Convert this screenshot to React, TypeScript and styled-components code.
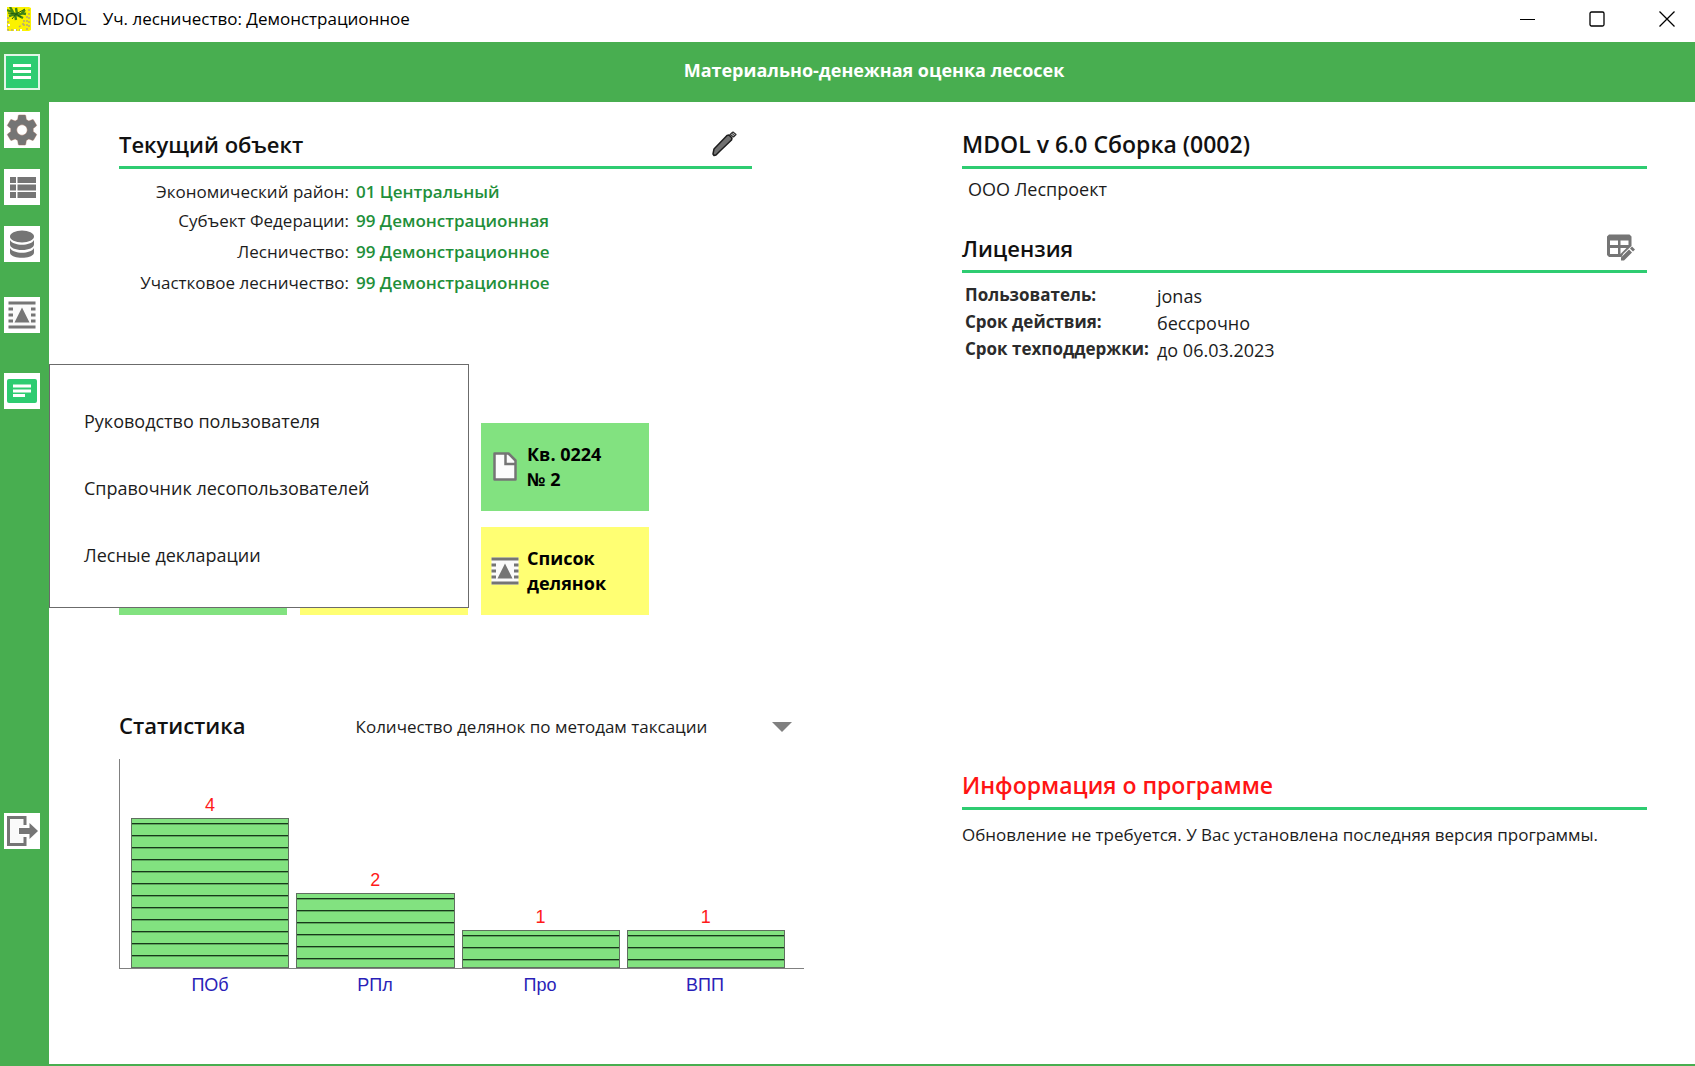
import React from 'react';
import styled, { createGlobalStyle } from 'styled-components';

const GREEN = '#48ae50';
const ACCENT = '#2ecc71';
const GREY = '#757575';

const GlobalStyle = createGlobalStyle`
  *, *::before, *::after { box-sizing: border-box; }
  body {
    margin: 0;
    background: #fff;
    color: #1c1c1c;
    font-family: "Open Sans", "Noto Sans", sans-serif;
    font-size: 17px;
    line-height: 24px;
  }
  button { font: inherit; color: inherit; border: 0; padding: 0; background: none; cursor: pointer; }
  h1, h2, p, dl, dd, dt, ul, ol { margin: 0; padding: 0; }
  ul, ol { list-style: none; }
  svg { display: block; }
`;

const Window = styled.div`
  display: flex;
  flex-direction: column;
  min-height: 100vh;
`;

const TitleBar = styled.header`
  display: flex;
  align-items: center;
  justify-content: space-between;
  height: 42px;
  padding: 0 12px 4px 7px;
  color: #000;
`;

const AppName = styled.div`
  display: flex;
  align-items: center;
  gap: 6px;
`;

const Caption = styled.span`
  padding-left: 10px;
`;

const WindowControls = styled.div`
  display: flex;
  gap: 38px;
`;

const WindowButton = styled.button`
  display: grid;
  place-items: center;
  width: 32px;
  height: 32px;
`;

const Banner = styled.div`
  display: flex;
  align-items: center;
  gap: 13px;
  height: 60px;
  padding-left: 4px;
  background: ${GREEN};
`;

const BannerTitle = styled.h1`
  flex: 1;
  padding-bottom: 4px;
  color: #fff;
  font-size: 18px;
  font-weight: 700;
  line-height: 24px;
  text-align: center;
`;

const Body = styled.div`
  display: flex;
  flex: 1;
  border-bottom: 2px solid ${GREEN};
`;

const Sidebar = styled.nav`
  position: relative;
  flex: none;
  width: 49px;
  padding: 10px 0 0 4px;
  background: ${GREEN};
`;

const ToolButton = styled.button<{ $active?: boolean; $gap?: number }>`
  display: grid;
  place-items: center;
  width: 36px;
  height: 36px;
  margin-bottom: ${(p) => p.$gap ?? 21}px;
  background: ${(p) => (p.$active ? ACCENT : '#fff')};
  border: ${(p) => (p.$active ? '2px solid #e2f6e8' : '0')};
`;

const Popup = styled.ul`
  position: absolute;
  z-index: 1;
  top: 262px;
  left: 49px;
  width: 420px;
  padding: 22px 0 19px;
  background: #fff;
  border: 1px solid #6b6b6b;
`;

const PopupItem = styled.li`
  height: 67px;
`;

const PopupButton = styled.button`
  width: 100%;
  height: 100%;
  padding-left: 34px;
  font-size: 18px;
  text-align: left;
`;

const Content = styled.main`
  display: grid;
  flex: 1;
  grid-template-columns: 1fr 1fr;
  gap: 158px;
  padding: 25px 48px 64px 70px;
`;

const Section = styled.section<{ $top?: number; $inset?: number }>`
  margin-top: ${(p) => p.$top ?? 0}px;
  margin-right: ${(p) => p.$inset ?? 0}px;
`;

const SectionHead = styled.div`
  display: flex;
  align-items: center;
  justify-content: space-between;
  height: 42px;
  padding: 0 12px 5px 0;
  border-bottom: 3px solid ${ACCENT};
`;

const Heading = styled.h2<{ $alert?: boolean; $large?: boolean }>`
  color: ${(p) => (p.$alert ? '#ff1414' : '#111')};
  font-size: ${(p) => (p.$large ? 23 : 22)}px;
  font-weight: 600;
  line-height: 30px;
`;

const IconButton = styled.button`
  display: grid;
  place-items: center;
  width: 28px;
  height: 28px;
`;

const ObjectFacts = styled.dl`
  display: grid;
  grid-template-columns: 230px 1fr;
  grid-template-rows: 28px 30px 31px 31px;
  column-gap: 7px;
  align-items: center;
  margin-top: 9px;
  dt { text-align: right; white-space: nowrap; }
  dd { color: #1f8f3a; font-weight: 600; }
`;

const LicenseFacts = styled.dl`
  display: grid;
  grid-template-columns: 192px 1fr;
  grid-auto-rows: 27px;
  align-items: center;
  margin: 9px 0 0 3px;
  dt { padding-bottom: 2px; font-weight: 700; white-space: nowrap; color: #2b2b2b; }
  dd { font-size: 18px; }
`;

const Company = styled.p`
  margin: 8px 0 0 6px;
  font-size: 18px;
`;

const Tiles = styled.div`
  display: grid;
  grid-template-columns: repeat(3, 168px);
  grid-auto-rows: 88px;
  gap: 16px 13px;
  margin-top: 125px;
`;

const Tile = styled.button<{ $tone: 'green' | 'yellow'; $column: number; $row: number }>`
  display: flex;
  align-items: center;
  gap: 4px;
  grid-column: ${(p) => p.$column};
  grid-row: ${(p) => p.$row};
  padding-left: 6px;
  background: ${(p) => (p.$tone === 'green' ? '#82e280' : '#ffff73')};
  color: #000;
  font-size: 18px;
  font-weight: 700;
  line-height: 25px;
  text-align: left;
`;

const TileIcon = styled.span`
  display: grid;
  place-items: center;
  width: 36px;
  height: 36px;
`;

const StatsHead = styled.div`
  display: flex;
  align-items: center;
  height: 36px;
`;

const StatsPicker = styled.div`
  position: relative;
  flex: 1;
  padding-top: 3px;
  margin: 0 10px 0 110px;
`;

const StatsSelect = styled.select`
  display: block;
  width: 100%;
  height: 30px;
  padding: 0;
  appearance: none;
  background: none;
  border: 0;
  color: inherit;
  font: inherit;
`;

const Arrow = styled.svg`
  position: absolute;
  top: 13px;
  right: 2px;
  pointer-events: none;
`;

const Plot = styled.div`
  display: flex;
  align-items: flex-end;
  gap: 7px;
  height: 210px;
  margin-top: 16px;
  padding: 0 19px 0 11px;
  border: solid #808080;
  border-width: 0 0 1px 1px;
`;

const BarColumn = styled.div`
  flex: 1;
  color: #ff1a1a;
  font-family: "Liberation Sans", Arial, sans-serif;
  font-size: 18px;
  line-height: 26px;
  text-align: center;
`;

const Bar = styled.div`
  border: 1px solid #5f6f5f;
  background: repeating-linear-gradient(to bottom, #82e280 0 4px, #17381a 4px 5px, #5ca55c 5px 6px, #82e280 6px 12px);
`;

const Names = styled.ul`
  display: flex;
  gap: 7px;
  padding: 4px 20px 0 12px;
  color: #2a1fb8;
  font-family: "Liberation Sans", Arial, sans-serif;
  font-size: 18px;
  text-align: center;
  li { flex: 1; }
`;

const Notice = styled.p`
  margin-top: 13px;
`;

const Logo = () => (
  <svg width="24" height="24" viewBox="0 0 24 24" aria-hidden="true">
    <path fill="#fbf200" d="M0 0h22l2 1v22l-2 1H1l-1-1z" />
    <path fill="none" stroke="#3f8416" strokeWidth="2.4" d="M0 3l5 2 4 3 5-1 4-4M3 0l3 5M9 1l1 6M2 9l6-2 1 6M10 8l6 3M14 6l5 1" />
    <path fill="none" stroke="#1f5c0c" strokeWidth="1" d="M1 6l8 1 9-5M5 12l4-5 5 3" />
    <path fill="none" stroke="#b5a878" strokeWidth="1.5" strokeDasharray="2 2" d="M1 10v13h12M17 13v8M20 9v14M22 2v20M12 20l5-4" />
    <path fill="#fff" d="M1 17h2v2H1zM7 22h2v2H7zM13 22h2v2h-2z" />
  </svg>
);

const MenuIcon = () => (
  <svg width="18" height="16" viewBox="0 0 18 16" fill="#fff" aria-hidden="true">
    <path d="M0 0h18v3H0zM0 6h18v3H0zM0 12h18v3H0z" />
  </svg>
);

const GearIcon = () => (
  <svg width="36" height="36" viewBox="0 0 24 24" aria-hidden="true">
    <path
      fill={GREY}
      stroke="#a0705c"
      strokeWidth=".3"
      d="M19.43 12.98c.04-.32.07-.64.07-.98s-.03-.66-.07-.98l2.11-1.65c.19-.15.24-.42.12-.64l-2-3.46c-.12-.22-.39-.3-.61-.22l-2.49 1c-.52-.4-1.08-.73-1.69-.98l-.38-2.65C14.46 2.18 14.25 2 14 2h-4c-.25 0-.46.18-.49.42l-.38 2.65c-.61.25-1.17.59-1.69.98l-2.49-1c-.23-.09-.49 0-.61.22l-2 3.46c-.13.22-.07.49.12.64l2.11 1.65c-.04.32-.07.65-.07.98s.03.66.07.98l-2.11 1.65c-.19.15-.24.42-.12.64l2 3.46c.12.22.39.3.61.22l2.49-1c.52.4 1.08.73 1.69.98l.38 2.65c.03.24.24.42.49.42h4c.25 0 .46-.18.49-.42l.38-2.65c.61-.25 1.17-.59 1.69-.98l2.49 1c.23.09.49 0 .61-.22l2-3.46c.12-.22.07-.49-.12-.64l-2.11-1.65zM12 15.5c-1.93 0-3.5-1.57-3.5-3.5s1.57-3.5 3.5-3.5 3.5 1.57 3.5 3.5-1.57 3.5-3.5 3.5z"
    />
  </svg>
);

const ListIcon = () => (
  <svg width="36" height="36" viewBox="0 0 36 36" fill={GREY} aria-hidden="true">
    <path d="M6 8h6v6H6zM13.500 8H32v6H13.500zM6 15.500h6v6H6zM13.500 15.500H32v6H13.500zM6 23h6v6H6zM13.500 23H32v6H13.500z" />
  </svg>
);

const DatabaseIcon = () => (
  <svg width="36" height="36" viewBox="0 0 36 36" fill={GREY} aria-hidden="true">
    <ellipse cx="18" cy="10.500" rx="12" ry="6" />
    <path d="M6 14c2 3.300 6.500 4.700 12 4.700S28 17.300 30 14v4.500c0 3-5 5.500-12 5.500S6 21.500 6 18.500z" />
    <path d="M6 22c2 3.300 6.500 4.700 12 4.700S28 25.300 30 22v4.500c0 3-5 5.300-12 5.300S6 29.500 6 26.500z" />
  </svg>
);

const PlotIcon = () => (
  <svg width="36" height="36" viewBox="0 0 36 36" aria-hidden="true">
    <path fill="#fafafa" d="M4.500 4.500h27v27h-27z" />
    <path
      fill={GREY}
      d="M4.500 4.500h27v3h-27zM4.500 28.500h27v3h-27zM4.500 10.500H9v3H4.500zM4.500 16.500H9v3H4.500zM4.500 22.500H9v3H4.500zM27 10.500h4.500v3H27zM27 16.500h4.500v3H27zM27 22.500h4.500v3H27zM18 10.500l7.500 15h-15z"
    />
  </svg>
);

const NotesIcon = () => (
  <svg width="36" height="36" viewBox="0 0 36 36" aria-hidden="true">
    <rect x="3" y="6" width="30" height="24" rx="2" fill={ACCENT} />
    <path fill="#fff" d="M9 11.500h18v3H9zM9 16.500h18v3H9zM9 21h12v3H9z" />
  </svg>
);

const ExitIcon = () => (
  <svg width="36" height="36" viewBox="0 0 36 36" aria-hidden="true">
    <path fill="#fafafa" stroke={GREY} strokeWidth="3" d="M21 12V4.500H4.500v27H21V24" />
    <path fill={GREY} stroke="#fff" strokeWidth="1.500" paintOrder="stroke" d="M15 15h10.500v-5L34 18l-8.500 8v-5H15z" />
  </svg>
);

const MarkerIcon = () => (
  <svg width="28" height="28" viewBox="1 0 28 28" aria-hidden="true">
    <path fill="#707070" stroke="#1c1c1c" strokeWidth="1.500" strokeLinejoin="round" d="M2 24l1-5L16 5.500l2-.5 3 3-.5 2L9 21l-4 4-2 .5z" />
    <path fill="#ccc" stroke="#333" strokeWidth="1.200" strokeLinejoin="round" d="M19 4.500L22 2l3 2.500L22.500 7z" />
    <path stroke="#333" d="M20.500 3l3.500 3" />
  </svg>
);

const TableEditIcon = () => (
  <svg width="28" height="28" viewBox="0 0 28 28" aria-hidden="true">
    <path
      fill={GREY}
      fillRule="evenodd"
      d="M2 .5h20.500l2 2V12l-8 7.500-2 3.500H2l-2-2V2.500zM3 6.500v4.500h8V6.500zM13.500 6.500v4.500h8V6.500zM3 14v6h8v-6zM13.500 14v6l6-6z"
    />
    <path fill={GREY} d="M14 23.500l8-8 3 3-8 8h-3zM23 14.500l2-2 3 3-2 2z" />
  </svg>
);

const PageIcon = () => (
  <svg width="30" height="30" viewBox="0 0 30 30" aria-hidden="true">
    <path fill="#fcfcfc" stroke={GREY} strokeWidth="2.500" strokeLinejoin="round" d="M4.500 1.500h14l7 7v19h-21z" />
    <path fill="none" stroke={GREY} strokeWidth="2.500" d="M15.500 1.500V12h10" />
  </svg>
);

const TOOLS = [
  { id: 'settings', label: 'Настройки', icon: <GearIcon /> },
  { id: 'lists', label: 'Списки', icon: <ListIcon /> },
  { id: 'data', label: 'База данных', icon: <DatabaseIcon />, gap: 35 },
  { id: 'plots', label: 'Список делянок', icon: <PlotIcon />, gap: 40 },
  { id: 'help', label: 'Справка', icon: <NotesIcon />, gap: 404 },
  { id: 'exit', label: 'Выход', icon: <ExitIcon /> },
];

const MENU = ['Руководство пользователя', 'Справочник лесопользователей', 'Лесные декларации'];

const OBJECT = [
  ['Экономический район:', '01 Центральный'],
  ['Субъект Федерации:', '99 Демонстрационная'],
  ['Лесничество:', '99 Демонстрационное'],
  ['Участковое лесничество:', '99 Демонстрационное'],
];

const LICENSE = [
  ['Пользователь:', 'jonas'],
  ['Срок действия:', 'бессрочно'],
  ['Срок техподдержки:', 'до 06.03.2023'],
];

const STATS = [
  { name: 'ПОб', count: 4 },
  { name: 'РПл', count: 2 },
  { name: 'Про', count: 1 },
  { name: 'ВПП', count: 1 },
];

const barHeight = (count: number) => Math.round(count * 37.5);

export default function App() {
  return (
    <Window>
      <GlobalStyle />
      <TitleBar>
        <AppName>
          <Logo />
          <span>MDOL</span>
          <Caption>Уч. лесничество: Демонстрационное</Caption>
        </AppName>
        <WindowControls>
          <WindowButton aria-label="Свернуть">
            <svg width="16" height="16" viewBox="0 0 16 16" stroke="#000"><path d="M1 8.500h15" /></svg>
          </WindowButton>
          <WindowButton aria-label="Развернуть">
            <svg width="16" height="16" viewBox="0 0 16 16" stroke="#000" strokeWidth="1.300" fill="none"><rect x="1" y="1" width="14" height="14" rx="1.500" /></svg>
          </WindowButton>
          <WindowButton aria-label="Закрыть">
            <svg width="16" height="16" viewBox="0 0 16 16" stroke="#000" strokeWidth="1.300"><path d="M.5.5l15 15M15.500.5l-15 15" /></svg>
          </WindowButton>
        </WindowControls>
      </TitleBar>

      <Banner>
        <ToolButton $active $gap={0} aria-label="Меню"><MenuIcon /></ToolButton>
        <BannerTitle>Материально-денежная оценка лесосек</BannerTitle>
      </Banner>

      <Body>
        <Sidebar>
          {TOOLS.map((tool) => (
            <ToolButton key={tool.id} $gap={tool.gap} aria-label={tool.label}>{tool.icon}</ToolButton>
          ))}
          <Popup>
            {MENU.map((item) => (
              <PopupItem key={item}><PopupButton>{item}</PopupButton></PopupItem>
            ))}
          </Popup>
        </Sidebar>

        <Content>
          <div>
            <Section $inset={52}>
              <SectionHead>
                <Heading>Текущий объект</Heading>
                <IconButton aria-label="Изменить объект"><MarkerIcon /></IconButton>
              </SectionHead>
              <ObjectFacts>
                {OBJECT.map(([label, value]) => (
                  <React.Fragment key={label}><dt>{label}</dt><dd>{value}</dd></React.Fragment>
                ))}
              </ObjectFacts>
            </Section>

            <Tiles>
              <Tile as="div" $tone="green" $column={1} $row={2} />
              <Tile as="div" $tone="yellow" $column={2} $row={2} />
              <Tile $tone="green" $column={3} $row={1}>
                <TileIcon><PageIcon /></TileIcon>
                <span>Кв. 0224<br />№ 2</span>
              </Tile>
              <Tile $tone="yellow" $column={3} $row={2}>
                <TileIcon><PlotIcon /></TileIcon>
                <span>Список<br />делянок</span>
              </Tile>
            </Tiles>

            <Section $top={92}>
              <StatsHead>
                <Heading>Статистика</Heading>
                <StatsPicker>
                  <StatsSelect aria-label="Показатель">
                    <option>Количество делянок по методам таксации</option>
                  </StatsSelect>
                  <Arrow width="20" height="10" viewBox="0 0 20 10" fill="#808080"><path d="M0 0h20L10 10z" /></Arrow>
                </StatsPicker>
              </StatsHead>
              <Plot>
                {STATS.map((s) => (
                  <BarColumn key={s.name}>
                    {s.count}
                    <Bar style={{ height: barHeight(s.count) }} />
                  </BarColumn>
                ))}
              </Plot>
              <Names>
                {STATS.map((s) => <li key={s.name}>{s.name}</li>)}
              </Names>
            </Section>
          </div>

          <div>
            <Section>
              <SectionHead><Heading $large>MDOL v 6.0 Сборка (0002)</Heading></SectionHead>
              <Company>ООО Леспроект</Company>
            </Section>
            <Section $top={30}>
              <SectionHead>
                <Heading>Лицензия</Heading>
                <IconButton aria-label="Изменить лицензию"><TableEditIcon /></IconButton>
              </SectionHead>
              <LicenseFacts>
                {LICENSE.map(([label, value]) => (
                  <React.Fragment key={label}><dt>{label}</dt><dd>{value}</dd></React.Fragment>
                ))}
              </LicenseFacts>
            </Section>
            <Section $top={405}>
              <SectionHead><Heading $alert $large>Информация о программе</Heading></SectionHead>
              <Notice>Обновление не требуется. У Вас установлена последняя версия программы.</Notice>
            </Section>
          </div>
        </Content>
      </Body>
    </Window>
  );
}
